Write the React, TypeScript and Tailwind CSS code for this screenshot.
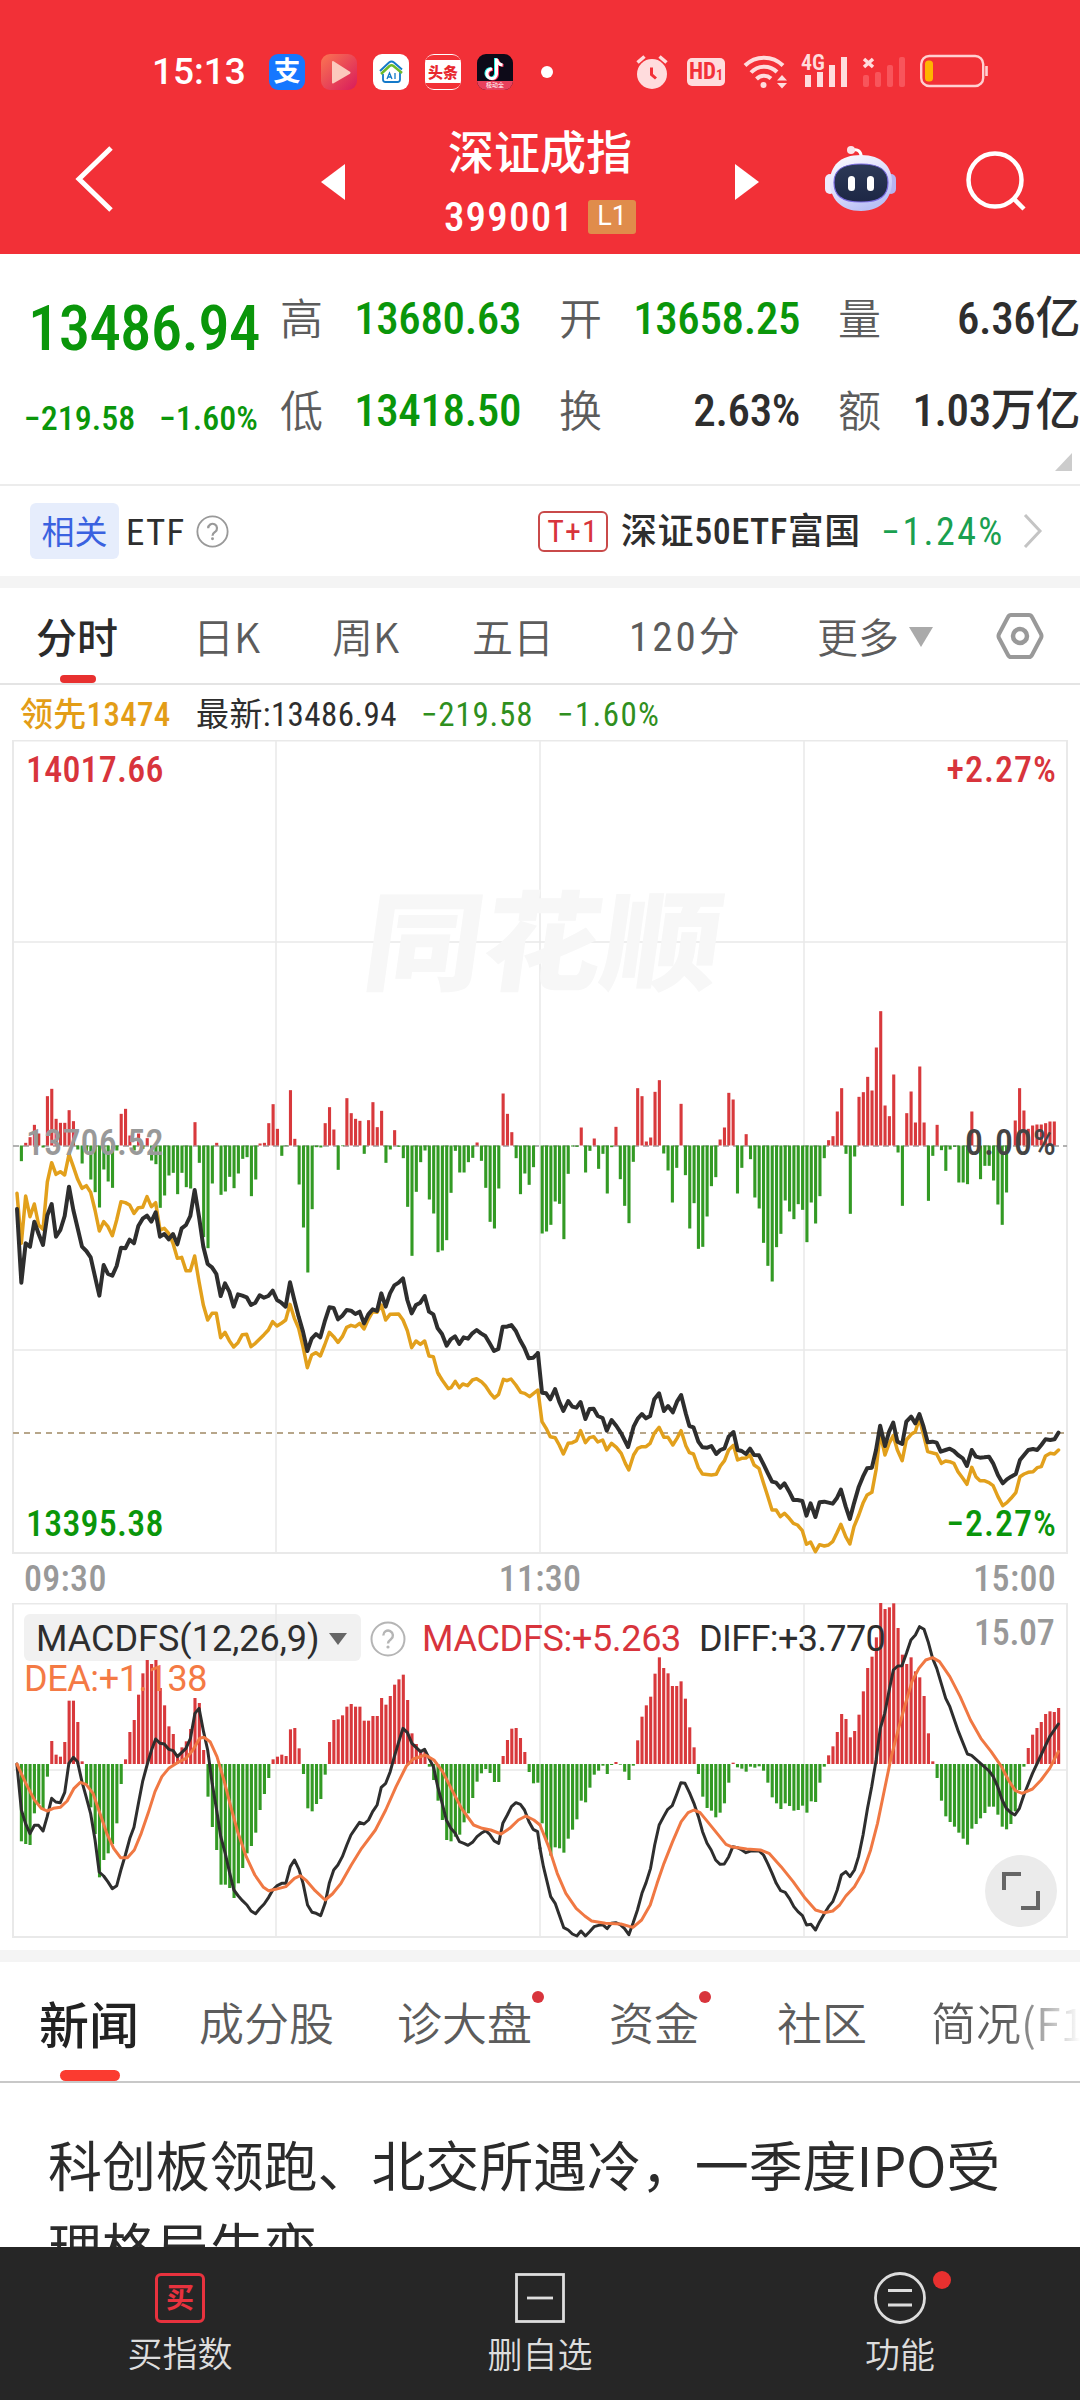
import React from 'react';

// net order flow per minute, 09:30 - 15:00
const flow = [
  0, -47, 8, 25, 62, 36, -6, 148, 170, 80, 68, 68, 106, 73, -12, -54, -18, -102, -140, -186, -72, -108, -127, -15, 95, 110, 30, -15, 36, -10,
  22, -45, -56, -187, -150, -90, -82, -146, -82, -125, -129, 70, -52, -275, -308, -114, 8, -148, -138, -94, -128, -84, -40, -35, -152, -102, 6, 8, 67, 124,
  50, -31, -2, 166, 20, -117, -246, -381, -191, -5, -6, 67, 115, 48, -73, -2, 142, 97, 80, 74, -25, 76, 130, 55, 104, -52, -12, 46, -4, -38,
  -184, -331, -139, -50, -15, -162, -204, -320, -315, -284, -142, -16, -81, -81, -50, -37, 9, -46, -127, -229, -249, -129, 156, 95, 40, -38, -146, -84, -118, -65,
  0, -264, -258, -238, -168, -175, -281, -85, -3, -4, 54, -81, -16, 21, -70, -25, -144, -5, 56, -101, -181, -233, -49, 172, 148, 12, 24, 161, 196, -24,
  -75, -171, -67, 125, -89, -249, -173, -310, -304, -213, -122, -95, 18, 54, 158, 138, -144, -67, 34, -41, -156, -189, -292, -361, -408, -305, -265, -165, -198, -221,
  -176, -193, -290, -171, -234, -152, -38, 16, 28, 102, 172, -25, -205, -33, 146, 160, 206, 165, 294, 403, 120, 88, 213, -21, -181, 97, 162, 69, 237, 69,
  -166, -31, 62, -14, -76, -12, -4, -111, -111, -116, 102, 0, -101, -61, -61, -105, -177, -238, -141, 0, 75, 172, 105, 50, 60, 63, 63, 67, 72, 72,
];

const macd = [
  0, -232, -240, -243, -148, -120, -136, -38, 69, 28, 22, 66, 190, 190, 126, 8, -60, -130, -210, -340, -288, -268, -240, -178, -60, 14, 96, 132, 208, 272,
  312, 300, 312, 228, 176, 113, 90, 30, 50, 68, 105, 198, 183, 42, -98, -189, -258, -362, -362, -372, -402, -358, -312, -268, -246, -206, -138, -90, -42, 14,
  22, 28, 24, 104, 108, 47, -30, -133, -142, -120, -105, -32, 66, 132, 134, 146, 172, 180, 172, 172, 130, 130, 144, 144, 198, 178, 204, 238, 254, 268,
  192, 92, 60, 42, 40, -8, -48, -110, -168, -228, -232, -218, -212, -175, -148, -102, -53, -28, -15, -27, -54, -54, 24, 72, 106, 108, 78, 36, -24, -58,
  -56, -178, -230, -275, -250, -253, -266, -224, -197, -166, -110, -115, -71, -32, -20, -5, -30, -3, 6, -2, -23, -48, -5, 71, 142, 176, 202, 271, 320, 288,
  272, 234, 234, 248, 196, 110, 50, -30, -98, -132, -140, -160, -146, -118, -56, 4, -10, -14, -23, -8, -11, -7, -20, -56, -100, -118, -135, -118, -126, -140,
  -138, -125, -146, -112, -114, -56, -8, 26, 53, 96, 150, 135, 80, 99, 148, 218, 288, 322, 380, 484, 465, 470, 482, 408, 328, 300, 320, 278, 260, 204,
  92, 8, -42, -110, -157, -174, -188, -206, -224, -242, -194, -180, -163, -147, -128, -128, -152, -188, -196, -180, -142, -78, -8, 48, 88, 108, 126, 150, 158, 156, 168,
];

const priceAm =
  '51,687 64,908 77,790 90,800 103,725 116,762 129,795 142,706 155,672 168,770 181,750 194,708 207,620 220,690 233,745 246,800 259,813 272,832 285,890 298,947 311,855 324,882 337,887 350,858 363,803 376,805 389,779 402,790 415,738 428,716 441,707 454,725 467,697 480,770 493,762 506,778 519,762 532,793 545,745 558,735 571,708 584,630 597,710 610,800 623,852 636,862 649,882 662,948 675,910 688,935 701,980 714,943 727,947 740,952 753,975 766,968 779,946 792,953 805,948 818,932 831,960 844,968 857,980 870,907 883,960 896,1010 909,1055 922,1113 935,1076 948,1062 961,1072 974,1025 988,982 1001,984 1014,1018 1027,1007 1040,990 1053,992 1066,1002 1079,995 1092,1030 1105,1003 1118,988 1131,993 1144,940 1157,980 1170,940 1183,916 1196,908 1209,895 1222,960 1235,1000 1248,975 1261,968 1274,948 1287,995 1300,1003 1313,1045 1326,1062 1340,1097 1352,1078 1365,1069 1378,1092 1391,1072 1404,1076 1417,1060 1430,1050 1443,1060 1456,1068 1469,1090 1482,1113 1495,1107 1508,1040 1521,1040 1534,1035 1547,1052 1560,1080 1573,1103 1586,1135 1600,1133 1613,1120';
const pricePm =
  '781,39 787,158 793,160 799,178 806,147 812,185 818,213 825,183 831,200 837,203 843,186 850,237 856,207 862,206 868,228 875,234 881,272 888,240 895,258 902,280 912,321 920,260 926,236 932,222 938,235 944,228 950,178 957,160 964,213 970,198 977,217 983,185 989,165 996,222 1001,258 1007,262 1014,305 1020,322 1027,323 1033,318 1040,342 1046,330 1052,325 1058,290 1065,276 1071,330 1077,333 1083,342 1089,326 1095,345 1102,346 1108,370 1115,400 1121,425 1127,428 1133,443 1139,430 1146,455 1152,480 1158,480 1165,483 1171,527 1177,490 1184,531 1190,487 1197,485 1209,491 1215,475 1221,449 1228,500 1234,537 1240,490 1247,440 1253,410 1259,385 1266,383 1272,330 1278,257 1285,318 1291,275 1297,248 1303,305 1310,312 1316,245 1323,230 1329,250 1335,222 1341,260 1347,307 1354,305 1360,308 1366,335 1373,330 1379,326 1385,333 1391,345 1398,355 1404,378 1411,330 1417,350 1423,353 1429,352 1436,350 1442,370 1449,405 1456,430 1462,418 1468,410 1475,402 1481,360 1487,345 1493,330 1500,327 1506,330 1512,315 1518,298 1525,300 1531,298 1537,278';
const leadAm =
  '51,640 64,790 77,648 90,710 103,672 116,735 129,748 142,606 155,548 168,583 181,575 194,585 207,523 220,560 233,598 246,625 259,617 272,637 285,690 298,753 311,725 324,740 337,767 350,720 363,665 376,668 389,675 402,700 415,683 428,682 441,650 454,680 467,668 480,750 493,745 506,760 519,790 532,835 545,832 558,872 571,872 584,828 597,905 610,975 623,1020 636,1000 649,1000 662,1073 675,1057 688,1082 701,1101 714,1088 727,1064 740,1063 753,1100 766,1090 779,1077 792,1064 805,1050 818,1025 831,1038 844,1030 857,1020 870,973 883,1015 896,1045 909,1100 922,1163 935,1125 948,1118 961,1128 974,1095 988,1057 1001,1070 1014,1087 1027,1070 1040,1042 1053,1036 1066,1040 1079,1030 1092,1047 1105,1018 1118,995 1131,997 1144,975 1157,1020 1170,1003 1196,1002 1209,1020 1222,1052 1235,1103 1248,1083 1261,1093 1274,1083 1287,1128 1300,1130 1313,1178 1316,1183';
const leadPm =
  '637,103 642,120 651,146 655,143 661,124 667,143 672,132 679,137 686,120 692,116 699,125 705,138 712,160 718,174 724,163 731,118 736,122 742,117 749,135 756,157 762,160 769,170 781,150 787,245 793,265 799,290 806,293 812,315 818,342 825,310 831,308 837,302 843,272 850,308 856,293 862,290 868,306 875,300 881,330 888,310 895,322 902,340 908,370 913,390 920,345 926,325 932,320 938,320 944,310 950,280 957,262 964,292 970,292 977,315 983,295 989,272 996,318 1001,338 1007,342 1014,383 1020,402 1033,405 1040,403 1046,378 1052,362 1058,330 1065,316 1071,360 1077,355 1083,354 1089,345 1095,375 1102,385 1108,425 1115,470 1121,510 1127,510 1133,530 1139,520 1146,535 1152,550 1158,555 1165,572 1171,613 1177,606 1184,635 1190,614 1197,618 1203,615 1209,605 1215,580 1221,553 1228,590 1234,612 1240,560 1247,525 1253,490 1259,465 1266,457 1272,390 1278,280 1285,345 1291,310 1297,287 1303,330 1310,362 1316,300 1323,283 1329,275 1335,235 1341,285 1347,335 1360,342 1367,370 1373,363 1379,365 1385,370 1391,395 1398,415 1404,433 1411,382 1417,410 1423,422 1429,422 1436,428 1442,437 1449,470 1456,497 1462,488 1468,475 1475,458 1481,410 1487,402 1493,397 1500,395 1506,383 1512,380 1518,348 1525,340 1531,342 1537,330';

const diffAm =
  '49,522 62,660 74,700 87,731 100,706 112,706 125,723 137,680 150,625 162,636 175,638 188,607 200,520 213,502 225,515 238,575 250,620 263,670 276,750 288,846 301,858 313,875 326,896 339,887 351,840 364,795 377,745 389,712 402,640 414,575 427,525 440,480 452,447 465,460 477,462 490,478 503,482 515,500 528,487 540,475 553,445 566,370 578,355 591,425 603,480 616,580 629,660 641,740 654,790 666,845 679,900 692,918 704,932 717,945 729,963 742,971 755,955 767,942 780,922 792,900 805,887 818,880 830,880 843,830 855,810 868,838 880,880 893,945 906,967 918,970 931,977 944,940 956,880 969,840 981,825 994,800 1007,765 1019,735 1032,715 1044,697 1057,702 1070,690 1082,665 1095,645 1107,592 1120,580 1133,545 1145,500 1158,455 1170,415 1183,428 1196,460 1208,472 1221,485 1233,478 1246,505 1259,532 1271,590 1284,640 1296,690 1309,715 1322,730 1334,755 1347,760 1359,766 1372,757 1385,740 1397,730 1410,722 1422,733 1435,753 1448,760 1460,700 1473,675 1485,650 1498,638 1511,643 1523,660 1536,695 1548,718 1561,725 1568,775';
const diffPm =
  '0,775 10,830 31,920 44,940 56,975 69,1013 82,1020 94,1032 107,1038 119,1023 132,1038 144,1025 157,1010 170,1006 182,1004 195,1016 207,1000 220,998 233,1004 245,1015 258,1034 270,1000 283,960 296,910 308,878 321,835 333,765 346,705 359,680 371,658 384,647 396,615 409,578 421,580 434,608 447,640 460,680 472,725 485,760 497,780 510,810 523,823 535,822 548,800 560,770 573,773 586,780 598,788 611,783 636,783 649,795 661,820 674,850 686,880 699,902 712,907 724,925 737,950 749,965 762,977 774,1005 787,1003 800,1020 812,995 825,972 838,950 850,935 863,900 875,855 888,845 900,860 913,840 925,800 938,735 951,655 963,590 976,510 988,415 1001,370 1014,300 1026,240 1039,228 1051,227 1064,190 1077,150 1090,135 1102,110 1115,118 1127,155 1140,205 1152,235 1165,280 1178,325 1190,350 1215,425 1241,492 1253,496 1279,520 1304,543 1316,560 1329,590 1342,630 1354,655 1367,668 1379,675 1392,655 1405,615 1430,550 1455,495 1480,440 1505,402';
const deaAm =
  '49,522 75,580 100,630 120,655 137,663 155,655 175,652 195,633 215,595 233,577 250,583 270,610 290,670 310,730 330,775 350,803 370,803 390,780 410,730 430,670 450,605 470,560 490,535 515,518 540,505 560,480 580,445 592,442 610,455 630,500 650,570 670,650 690,725 715,800 740,855 765,892 780,902 800,898 830,890 855,865 872,857 890,872 915,902 944,930 965,912 990,880 1020,825 1050,775 1090,720 1120,660 1150,590 1180,528 1200,507 1235,495 1260,510 1285,545 1310,595 1340,655 1375,705 1400,715 1425,720 1455,732 1480,715 1505,690 1527,678 1550,690 1568,705';
const deaPm =
  '0,705 25,770 50,850 75,910 105,955 130,978 150,993 190,1000 235,1002 270,1012 295,990 320,945 340,880 360,820 385,755 410,695 430,668 447,660 465,668 500,712 540,763 555,770 600,777 640,780 665,790 700,830 735,875 770,925 800,960 825,968 850,963 870,945 888,918 913,890 938,845 960,780 980,700 1000,600 1020,500 1040,420 1060,345 1080,275 1100,235 1120,210 1140,203 1160,215 1190,260 1220,320 1250,390 1280,445 1310,485 1340,530 1360,570 1380,602 1400,610 1430,597 1455,570 1480,535 1505,485';

const quotes = [
  { label: '高', value: '13680.63', color: 'text-[#0a960a]' },
  { label: '开', value: '13658.25', color: 'text-[#0a960a]' },
  { label: '量', value: '6.36亿', color: 'text-[#2e2e2e]' },
  { label: '低', value: '13418.50', color: 'text-[#0a960a]' },
  { label: '换', value: '2.63%', color: 'text-[#2e2e2e]' },
  { label: '额', value: '1.03万亿', color: 'text-[#2e2e2e]' },
];

const newsTabs = [
  { name: '成分股', width: 'w-[198px]', dot: false },
  { name: '诊大盘', width: 'w-[212px]', dot: true },
  { name: '资金', width: 'w-[168px]', dot: true },
  { name: '社区', width: 'w-[154px]', dot: false },
];

function Bars({ data, base }: { data: number[]; base: number }) {
  return (
    <>
      {data.map((v, i) =>
        v === 0 ? null : (
          <rect
            key={i}
            x={15.5 + i * 4.34}
            y={v > 0 ? base - v / 3 : base}
            width={3.1}
            height={Math.abs(v) / 3}
            fill={v > 0 ? '#d8393c' : '#339a24'}
          />
        )
      )}
    </>
  );
}

function Line({ points, color, width, transform }: { points: string; color: string; width: number; transform: string }) {
  return (
    <polyline
      points={points}
      transform={transform}
      fill="none"
      stroke={color}
      strokeWidth={width}
      strokeLinejoin="round"
      strokeLinecap="round"
      vectorEffect="non-scaling-stroke"
    />
  );
}

function Help({ className }: { className: string }) {
  return (
    <svg className={className} viewBox="0 0 36 36" fill="none" stroke="currentColor" strokeWidth={2}>
      <circle cx="18" cy="18" r="16.5" />
      <path d="M13.3 14.5a4.8 4.8 0 1 1 7.6 3.8c-1.8 1.3-2.9 2-2.9 4.2" strokeWidth={2.4} />
      <circle cx="18" cy="26" r="1.6" fill="currentColor" stroke="none" />
    </svg>
  );
}

function StatusBar() {
  return (
    <div className="flex h-[35px] items-center pl-[152px] text-white">
      <span className="w-[117px] font-['Roboto'] text-[37px] font-medium leading-none">15:13</span>
      <div className="flex gap-4">
        {/* Alipay */}
        <div className="flex size-9 items-center justify-center rounded-[9px] bg-[#1677ff] text-[27px] font-bold leading-none">
          <span className="-mt-1">支</span>
        </div>
        {/* video */}
        <svg className="size-9" viewBox="0 0 36 36">
          <defs>
            <linearGradient id="video" x1="0" y1="0" x2="1" y2="1">
              <stop offset="0" stopColor="#fb7552" />
              <stop offset="1" stopColor="#d81b5c" />
            </linearGradient>
          </defs>
          <rect width="36" height="36" rx="9" fill="url(#video)" />
          <path d="M11 8.5v20q0 1.6 1.6.8L29 19.8q1.2-1 0-2L12.6 7.3Q11 6.5 11 8.5z" fill="#fcc9bd" />
        </svg>
        {/* smart home */}
        <svg className="size-9" viewBox="0 0 36 36" fill="none">
          <rect width="36" height="36" rx="9" fill="#fff" />
          <path d="M10 20v5.5q0 2.5 2.5 2.5h12q2.5 0 2.5-2.5V18" stroke="#1479c9" strokeWidth="1.8" />
          <path d="M7 17l9-8.5q2.5-2 5 0l8 7" stroke="#1479c9" strokeWidth="2" />
          <path d="M8 20l8.5-8q2-1.5 4 0L29 19" stroke="#6dbb2c" strokeWidth="2.5" />
          <path d="M14 25l2.5-6 2.5 6M15 23h3M22 19v6" stroke="#1479c9" strokeWidth="1.3" />
        </svg>
        {/* Toutiao */}
        <div className="flex size-9 items-center overflow-hidden rounded-[9px] border-y border-white bg-[#f23036]">
          <div className="flex h-[23px] w-9 items-center justify-center bg-white text-[15px] font-black leading-none text-[#e8282e]">头条</div>
        </div>
        {/* Douyin */}
        <div className="flex size-9 flex-col overflow-hidden rounded-[9px] bg-[#0d0a18]">
          <svg className="h-[27px] w-9 shrink-0" viewBox="0 0 36 27" fill="none" strokeWidth="3">
            <path d="M18.5 4v15.5a4.8 4.8 0 1 1-4.5-5M18.5 5q1.5 5 6 5.5" stroke="#25f4ee" />
            <path d="M20.5 5v15.5a4.8 4.8 0 1 1-4.5-5M20.5 6q1.5 5 6 5.5" stroke="#fe2c55" />
            <path d="M19.5 4.5v15.5a4.8 4.8 0 1 1-4.5-5M19.5 5.5q1.5 5 6 5.5" stroke="#fff" />
          </svg>
          <div className="flex h-[9px] shrink-0 items-center justify-center bg-[#e8405c] text-[6px] leading-none">极动全</div>
        </div>
      </div>
      <div className="ml-7 size-3 rounded-full bg-white" />

      <div className="ml-[82px] flex items-center text-[#ffdcdd]">
        <svg className="h-[36px] w-[36px]" viewBox="0 0 36 36">
          <circle cx="17" cy="20" r="15" fill="currentColor" />
          <path d="M2.5 8.5l7-6M24.5 2.5l7 6" stroke="currentColor" strokeWidth="3.5" />
          <path d="M16.5 13.5v7l4.5 4" stroke="#f23037" strokeWidth="3" fill="none" />
        </svg>
        <div className="ml-[16px] flex h-7 w-[38px] items-center justify-center rounded-[5px] bg-[#ffdcdd] font-['Roboto_Condensed'] text-[23px] font-bold leading-none text-[#f23037]">
          HD<span className="mt-[6px] text-[14px]">1</span>
        </div>
        <svg className="ml-[18px] h-[36px] w-[46px]" viewBox="0 0 46 36" fill="none" stroke="currentColor">
          <path d="M2 11.5a27 27 0 0 1 38 0" strokeWidth="4" />
          <path d="M8 18.5a18 18 0 0 1 26-.5" strokeWidth="4" />
          <path d="M13.5 25a10.5 10.5 0 0 1 14.5-.5" strokeWidth="4" />
          <circle cx="20.5" cy="31" r="3" fill="currentColor" stroke="none" />
          <path d="M39 21l5 5.5H34zM39 34.5l5-5.5H34z" fill="currentColor" stroke="none" />
        </svg>
        <svg className="ml-[12px] h-[36px] w-[48px]" viewBox="0 0 48 36" fill="currentColor">
          <text x="0" y="16" fontFamily="Roboto Condensed" fontWeight="600" fontSize="22">4G</text>
          <rect x="4" y="21" width="6" height="12" />
          <rect x="16" y="18" width="6" height="15" />
          <rect x="28" y="11" width="6" height="22" />
          <rect x="40" y="3" width="6" height="30" />
        </svg>
        <svg className="ml-[12px] h-[36px] w-[46px]" viewBox="0 0 46 36" fill="#f8555b">
          <path d="M3 5l9 8M12 5l-9 8" stroke="#ffdcdd" strokeWidth="3.5" />
          <rect x="2" y="21" width="6" height="12" rx="2" />
          <rect x="14" y="18" width="6" height="15" rx="2" />
          <rect x="26" y="11" width="6" height="22" rx="2" />
          <rect x="38" y="3" width="6" height="30" rx="2" />
        </svg>
        <svg className="ml-[13px] h-[36px] w-[68px]" viewBox="0 0 68 36" fill="none">
          <rect x="1.2" y="2" width="62" height="30" rx="8" stroke="#ffd0d1" strokeWidth="2.4" />
          <rect x="5" y="6.5" width="8" height="21" rx="3.5" fill="#ffb400" />
          <path d="M66.5 12v10" stroke="#ffd0d1" strokeWidth="2.6" />
        </svg>
      </div>
    </div>
  );
}

function TitleBar() {
  return (
    <div className="mt-9 flex h-[120px] items-center pl-[74px] text-white">
      <svg className="mt-[-13px] h-[66px] w-[40px]" viewBox="0 0 40 66" fill="none" stroke="currentColor" strokeWidth="5">
        <path d="M37 2L5 33l32 31" />
      </svg>
      <svg className="mt-[-7px] ml-[207px] h-9 w-6" viewBox="0 0 24 36" fill="currentColor">
        <path d="M24 0v36L0 18z" />
      </svg>
      <div className="flex w-[390px] flex-col items-center">
        <h1 className="mt-[-12px] text-[46px] font-medium leading-[60px]">深证成指</h1>
        <div className="mt-[15px] flex items-center gap-3.5">
          <span className="font-['Roboto_Condensed'] text-[41px] font-medium leading-[46px] tracking-[1.2px]">399001</span>
          <span className="flex h-[34px] w-[48px] items-center justify-center rounded-[3px] bg-[#e08c4b] font-['Roboto'] text-[27px] leading-none">L1</span>
        </div>
      </div>
      <svg className="mt-[-7px] h-9 w-6" viewBox="0 0 24 36" fill="currentColor">
        <path d="M0 0v36l24-18z" />
      </svg>
      <svg className="mt-[-13px] ml-[65px] h-[68px] w-[74px]" viewBox="0 0 74 68">
        <defs>
          <linearGradient id="shell" x1="0" y1="0" x2="0.5" y2="1">
            <stop offset="0" stopColor="#ffffff" />
            <stop offset="0.6" stopColor="#dcdcfb" />
            <stop offset="1" stopColor="#b9c0f5" />
          </linearGradient>
          <linearGradient id="visor" x1="0" y1="0" x2="0" y2="1">
            <stop offset="0" stopColor="#2c3957" />
            <stop offset="1" stopColor="#1d2745" />
          </linearGradient>
        </defs>
        <path d="M28 5.5q9-3 9.5 8" fill="none" stroke="#fff" strokeWidth="3" />
        <circle cx="27" cy="5" r="4" fill="#fbe4ea" />
        <rect x="1" y="29" width="10" height="20" rx="5" fill="#efeafc" />
        <rect x="62" y="29" width="10" height="20" rx="5" fill="#b6b4f0" />
        <path d="M37 10c21 0 31 12 31 27S58 66 37 66 6 53 6 37s10-27 31-27z" fill="url(#shell)" />
        <path d="M37 19c19 0 27 6 27 18.5S57 57 37 57 10 50 10 37.5 18 19 37 19z" fill="url(#visor)" stroke="#7a6be0" strokeWidth="1.2" />
        <rect x="24" y="31" width="7" height="15" rx="3.5" fill="#fff" />
        <rect x="43" y="31" width="7" height="15" rx="3.5" fill="#fff" />
      </svg>
      <svg className="mt-[-9px] ml-[67px] h-[62px] w-[62px]" viewBox="0 0 62 62" fill="none" stroke="currentColor" strokeWidth="4.5">
        <circle cx="30" cy="30" r="26.5" />
        <path d="M48 48l11 11" />
      </svg>
    </div>
  );
}

function QuotePanel() {
  return (
    <section className="flex h-[232px] flex-col border-b-2 border-[#ececec]">
      <div className="flex h-[190px]">
        <div className="w-[280px] pt-[43px] font-['Roboto_Condensed'] text-[#0a960a]">
          <p className="pl-[28px] text-[63px] font-medium leading-[64px] tracking-[-0.8px]">13486.94</p>
          <p className="mt-[38px] flex gap-[24px] pl-[24px] text-[34px] font-medium leading-[38px]">
            <span>−219.58</span>
            <span>−1.60%</span>
          </p>
        </div>
        <div className="grid w-[800px] grid-cols-[241px_38px_241px_38px_242px] pt-[18px]">
          {quotes.map((q, i) => (
            <div key={q.label} className={`flex h-[92px] items-center justify-between ${i % 3 === 0 ? 'col-start-1' : i % 3 === 1 ? 'col-start-3' : 'col-start-5'}`}>
              <span className="-mt-1 text-[43px] font-[350] leading-none text-[#5c5c5c]">{q.label}</span>
              <span className={`font-['Roboto_Condensed','Noto_Sans_CJK_SC',sans-serif] text-[45px] font-medium leading-none tracking-[-0.4px] whitespace-nowrap ${q.color}`}>{q.value}</span>
            </div>
          ))}
        </div>
      </div>
      <svg className="mt-[9px] mr-2 h-[18px] w-[17px] self-end" viewBox="0 0 17 18">
        <path d="M17 0v18H0z" fill="#ccc" />
      </svg>
    </section>
  );
}

function EtfRow() {
  return (
    <section className="flex h-[90px] items-center pl-[30px] font-['Roboto_Condensed','Noto_Sans_CJK_SC',sans-serif] leading-none text-[#2e2e2e]">
      <span className="flex h-14 w-[89px] items-center justify-center rounded-md bg-[#e6edfc] pt-0.5 text-[33px] text-[#3a62e0]">相关</span>
      <span className="ml-[7px] w-[70px] pt-0.5 text-[37px] tracking-[1.2px]">ETF</span>
      <Help className="size-[33px] text-[#999]" />
      <span className="ml-[309px] flex h-[41px] w-[70px] items-center justify-center rounded-md border-2 border-[#c94a4a] text-[32px] tracking-[1px] text-[#d8343c]">T+1</span>
      <span className="ml-[13px] w-[260px] pt-0.5 text-[36px] font-medium tracking-[0.6px] whitespace-nowrap">深证50ETF富国</span>
      <span className="w-[142px] pt-0.5 text-[38px] tracking-[2.4px] text-[#1aa050]">−1.24%</span>
      <svg className="h-[34px] w-[20px]" viewBox="0 0 20 34" fill="none" stroke="#c4c4c4" strokeWidth="3">
        <path d="M2 1l15 16L2 33" />
      </svg>
    </section>
  );
}

function PeriodTabs() {
  return (
    <nav className="flex h-[97px] border-b-2 border-[#e4e4e4] pl-[36px] text-[41px] leading-[95px] font-[350] text-[#5c5c5c]">
      <div className="flex w-[157px] flex-col">
        <span className="h-[87px] font-medium text-[#2b2b2b]">分时</span>
        <span className="ml-6 h-[9px] w-9 rounded-full bg-[#e8302f]" />
      </div>
      <span className="w-[139px]">日K</span>
      <span className="w-[140px]">周K</span>
      <span className="w-[157px]">五日</span>
      <span className="w-[188px] pt-0.5 font-['Roboto_Condensed','Noto_Sans_CJK_SC',sans-serif] font-normal tracking-[3px]">120分</span>
      <span className="w-[92px]">更多</span>
      <svg className="mt-[39px] h-5 w-6" viewBox="0 0 24 20" fill="#aaa">
        <path d="M0 0h24L12 20z" />
      </svg>
      <svg className="mt-[24px] ml-[61px] h-[48px] w-[52px]" viewBox="0 0 52 48" fill="none" stroke="#999" strokeWidth="4" strokeLinejoin="round">
        <path d="M17 3h18q2 0 3 2l9 17q1 2 0 4l-9 17q-1 2-3 2H17q-2 0-3-2L5 26q-1-2 0-4l9-17q1-2 3-2z" />
        <circle cx="26" cy="24" r="7" strokeWidth="4.5" />
      </svg>
    </nav>
  );
}

function TimeChart() {
  const am = 'translate(0 980) scale(0.33333)';
  const pm = 'translate(0 1340) scale(0.6887 0.33333)';
  return (
    <section>
      <div className="flex h-[55px] items-center pt-1 pl-5 font-['Roboto_Condensed','Noto_Sans_CJK_SC',sans-serif] text-[33px] leading-none whitespace-nowrap text-[#2e2e2e]">
        <span className="w-[176px] font-medium tracking-[0.3px] text-[#e39d17]">领先13474</span>
        <span className="w-[225px] tracking-[0.4px]">最新:13486.94</span>
        <span className="w-[136px] tracking-[0.8px] text-[#2f8f20]">−219.58</span>
        <span className="tracking-[1.4px] text-[#2f8f20]">−1.60%</span>
      </div>
      <div className="grid h-[814px]">
        <svg className="h-[814px] w-[1080px] [grid-area:1/1]" viewBox="0 740 1080 814">
          <g stroke="#e9e9e9" strokeWidth="2" fill="none">
            <rect x="13" y="740.5" width="1054" height="812.5" />
            <path d="M13 942h1054M13 1350h1054" strokeWidth="1.3" />
            <path d="M276 740v813M540 740v813M804 740v813" strokeWidth="1.5" />
          </g>
          <g transform="translate(538 982) skewX(-8) scale(1.1 1)">
            <text textAnchor="middle" fontFamily="Noto Sans CJK SC" fontWeight="900" fontSize="108" fill="#f7f7f7">同花顺</text>
          </g>
          <path d="M13 1146h1054" stroke="#999" strokeWidth="1.5" strokeDasharray="6 4" />
          <path d="M13 1433h1054" stroke="#b7a68a" strokeWidth="2" strokeDasharray="6 5" />
          <Bars data={flow} base={1145.5} />
          <Line points={leadAm} color="#e2a01c" width={3.5} transform={am} />
          <Line points={leadPm} color="#e2a01c" width={3.5} transform={pm} />
          <Line points={priceAm} color="#2e2e2e" width={4} transform={am} />
          <Line points={pricePm} color="#2e2e2e" width={4} transform={pm} />
        </svg>
        <div className="relative flex flex-col justify-between py-[11px] pr-[23px] pl-[26px] font-['Roboto_Condensed'] text-[36px] font-medium leading-[38px] [grid-area:1/1]">
          <div className="flex justify-between text-[#d8343c]">
            <span className="tracking-[0.2px]">14017.66</span>
            <span className="tracking-[1px]">+2.27%</span>
          </div>
          <div className="-mt-2 flex justify-between">
            <span className="tracking-[0.2px] text-[#999]">13706.52</span>
            <span className="tracking-[1px] text-[#444]">0.00%</span>
          </div>
          <div className="flex justify-between text-[#0a960a]">
            <span className="tracking-[0.2px]">13395.38</span>
            <span className="tracking-[1px]">−2.27%</span>
          </div>
        </div>
      </div>
      <div className="grid h-[49px] grid-cols-3 pr-[24px] pl-[24px] font-['Roboto_Condensed'] text-[36px] font-medium leading-[51px] tracking-[0.3px] text-[#999]">
        <span>09:30</span>
        <span className="text-center">11:30</span>
        <span className="text-right">15:00</span>
      </div>
    </section>
  );
}

function MacdChart() {
  const am = 'translate(0 1590) scale(0.3444 0.33333)';
  const pm = 'translate(540 1590) scale(0.3444 0.33333)';
  return (
    <section className="grid h-[347px]">
      <div className="[grid-area:1/1]">
        <div className="mt-[11px] ml-6 h-[47px] w-[337px] rounded-md bg-[#f1f1f1]" />
      </div>
      <div className="z-10 font-['Roboto'] text-[36px] leading-none tracking-[-0.3px] whitespace-nowrap [grid-area:1/1]">
        <div className="flex h-[58px] items-center pt-[13px] pl-[36px] text-[#2e2e2e]">
          <span className="w-[293px] tracking-normal">MACDFS(12,26,9)</span>
          <svg className="h-3 w-[18px]" viewBox="0 0 18 12" fill="#666">
            <path d="M0 0h18L9 12z" />
          </svg>
          <Help className="ml-[23px] size-9 text-[#b5b5b5]" />
          <span className="ml-[16px] w-[277px] text-[#d8343c]">MACDFS:+5.263</span>
          <span className="w-[275px] tracking-[-0.6px]">DIFF:+3.770</span>
          <span className="-mt-3 font-['Roboto_Condensed'] font-medium text-[#999]">15.07</span>
        </div>
        <p className="pl-6 tracking-[-0.4px] text-[#f47a45]">DEA:+1.138</p>
        <button className="mt-[158px] ml-[985px] flex size-[72px] items-center justify-center rounded-full bg-[#ebebeb]">
          <svg className="size-[38px]" viewBox="0 0 38 38" fill="none" stroke="#666" strokeWidth="4">
            <path d="M2 18V2h17M36 19v17H19" />
          </svg>
        </button>
      </div>
      <svg className="relative h-[347px] w-[1080px] [grid-area:1/1]" viewBox="0 1603 1080 347">
        <g stroke="#e9e9e9" strokeWidth="1.5" fill="none">
          <rect x="13" y="1603.5" width="1054" height="333.5" strokeWidth="2" />
          <path d="M13 1770h1054M276 1603v334M540 1603v334M804 1603v334" />
        </g>
        <Bars data={macd} base={1764} />
        <Line points={diffAm} color="#2e2e2e" width={3} transform={am} />
        <Line points={diffPm} color="#2e2e2e" width={3} transform={pm} />
        <Line points={deaAm} color="#f07843" width={3} transform={am} />
        <Line points={deaPm} color="#f07843" width={3} transform={pm} />
      </svg>
    </section>
  );
}

function News() {
  return (
    <section className="h-[285px] overflow-hidden">
      <nav className="flex h-[121px] border-b-2 border-[#c8c8c8] text-[45px] leading-[120px] font-[350] whitespace-nowrap text-[#5c5c5c]">
        <div className="flex w-[199px] flex-col pl-[39px]">
          <span className="h-[108px] text-[50px] font-medium text-[#222]">新闻</span>
          <span className="ml-[21px] h-3 w-[60px] rounded-full bg-[#fb3b30]" />
        </div>
        {newsTabs.map((tab) => (
          <div key={tab.name} className={`flex shrink-0 ${tab.width}`}>
            {tab.name}
            {tab.dot && <span className="mt-[29px] size-3 rounded-full bg-[#d8343c]" />}
          </div>
        ))}
        <span className="w-[149px] overflow-hidden bg-linear-to-r from-[#5c5c5c] from-50% to-white bg-clip-text text-transparent">简况(F10)</span>
      </nav>
      <p className="pt-[40px] pr-[40px] pl-[48px] text-[54px] leading-[82px] tracking-[-0.1px] text-[#2b2b2b]">科创板领跑、北交所遇冷，一季度IPO受理格局生变</p>
    </section>
  );
}

function BottomBar() {
  return (
    <footer className="grid h-[153px] grid-cols-3 bg-[#262626] text-[35px] leading-none font-[350] text-[#ddd]">
      <div className="flex flex-col items-center pt-[26px]">
        <div className="flex size-[50px] items-center justify-center rounded-md border-[3px] border-[#e8323e] text-[28px] font-bold text-[#e8323e]">
          <span className="-mt-1">买</span>
        </div>
        <span className="mt-[11px]">买指数</span>
      </div>
      <div className="flex flex-col items-center pt-[26px]">
        <svg className="size-[50px]" viewBox="0 0 50 50" fill="none" stroke="#ddd" strokeWidth="2.8">
          <rect x="1.5" y="1.5" width="47" height="47" />
          <path d="M12 25h26" />
        </svg>
        <span className="mt-[12px]">删自选</span>
      </div>
      <div className="relative flex flex-col items-center pt-[25px]">
        <svg className="size-[52px]" viewBox="0 0 52 52" fill="none" stroke="#ddd" strokeWidth="2.8">
          <circle cx="26" cy="26" r="24.5" />
          <path d="M14 18.5h24M14 33h24" />
        </svg>
        <span className="mt-[11px]">功能</span>
        <span className="absolute top-6 left-[213px] size-[18px] rounded-full bg-[#e8302f]" />
      </div>
    </footer>
  );
}

export default function App() {
  return (
    <div className="h-[2400px] w-[1080px] overflow-hidden bg-white font-['Noto_Sans_CJK_SC',sans-serif]">
      {/* Header */}
      <header className="h-[254px] bg-[#f23037] pt-[54px]">
        <StatusBar />
        <TitleBar />
      </header>
      <QuotePanel />
      <EtfRow />
      <div className="h-3 bg-[#f4f4f4]" />
      <PeriodTabs />
      <TimeChart />
      <MacdChart />
      <div className="h-3 bg-[#f4f4f4]" />
      <News />
      <BottomBar />
    </div>
  );
}
